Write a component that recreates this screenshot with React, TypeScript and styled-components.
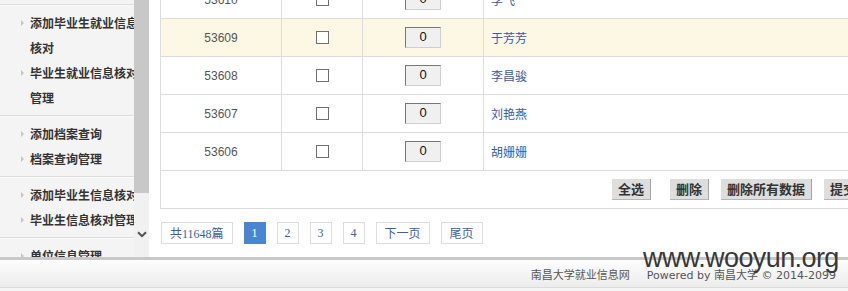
import styled, { createGlobalStyle } from "styled-components";

interface StudentRecord {
  id: number;
  name: string;
  active?: boolean;
}

const records: StudentRecord[] = [
  { id: 53610, name: "李飞" },
  { id: 53609, name: "于芳芳", active: true },
  { id: 53608, name: "李昌骏" },
  { id: 53607, name: "刘艳燕" },
  { id: 53606, name: "胡姗姗" },
];

const menuGroups: string[][] = [
  ["添加毕业生就业信息核对", "毕业生就业信息核对管理"],
  ["添加档案查询", "档案查询管理"],
  ["添加毕业生信息核对", "毕业生信息核对管理"],
  ["单位信息管理", "单位信息审核"],
];

const pages = ["1", "2", "3", "4"];

const GlobalStyle = createGlobalStyle`
  html, body {
    margin: 0;
    padding: 0;
    background: #fff;
    overflow: hidden;
  }

  body {
    font-family: "Liberation Sans", "Noto Sans CJK SC", sans-serif;
    font-size: 12px;
    color: #333;
  }
`;

const App = () => {
  return (
    <Page>
      <GlobalStyle />
      <Content>
        <Sidebar>
          <Menu>
            <MenuInner>
              {menuGroups.map((group, index) => (
                <MenuGroup key={index}>
                  {group.map((item) => (
                    <MenuItem key={item}>
                      <Bullet />
                      <MenuLabel>{item}</MenuLabel>
                    </MenuItem>
                  ))}
                </MenuGroup>
              ))}
            </MenuInner>
          </Menu>
          <ScrollTrack>
            <ScrollThumb />
            <ScrollArrow>
              <svg width="10" height="7" viewBox="0 0 10 7">
                <path
                  d="M1 1.2 L5 5.2 L9 1.2"
                  fill="none"
                  stroke="#505050"
                  strokeWidth="2"
                />
              </svg>
            </ScrollArrow>
          </ScrollTrack>
        </Sidebar>

        <Main>
          <Table>
            {records.map((record) => (
              <Row key={record.id} $active={record.active}>
                <IdCell>{record.id}</IdCell>
                <CenterCell>
                  <CheckBox type="checkbox" readOnly />
                </CenterCell>
                <CenterCell>
                  <CountInput value="0" readOnly />
                </CenterCell>
                <NameCell>{record.name}</NameCell>
              </Row>
            ))}
            <ButtonRow>
              <ActionButton $spaced>全选</ActionButton>
              <ActionButton>删除</ActionButton>
              <ActionButton>删除所有数据</ActionButton>
              <ActionButton>提交</ActionButton>
            </ButtonRow>
          </Table>

          <Pager>
            <PageLink>共11648篇</PageLink>
            {pages.map((page) => (
              <PageLink key={page} $num $active={page === "1"}>
                {page}
              </PageLink>
            ))}
            <PageLink>下一页</PageLink>
            <PageLink>尾页</PageLink>
          </Pager>
        </Main>
      </Content>

      <Footer>
        <FooterText>南昌大学就业信息网</FooterText>
        <FooterText>Powered by 南昌大学 © 2014-2099</FooterText>
      </Footer>

      <Watermark>www.wooyun.org</Watermark>
    </Page>
  );
};

const Page = styled.div`
  position: relative;
  width: 848px;
  height: 291px;
  overflow: hidden;
  background: #f5f5f5;
`;

const Content = styled.div`
  display: flex;
  height: 257px;
  overflow: hidden;
  background: #fff;
`;

const Sidebar = styled.div`
  display: flex;
  flex-shrink: 0;
  width: 149px;
`;

const Menu = styled.div`
  width: 134px;
  padding-top: 4px;
  overflow: hidden;
  background: #f4f4f4;
`;

const MenuInner = styled.div`
  width: 140px;
`;

const MenuGroup = styled.div`
  padding: 5px 0;
  border-top: 1px solid #dcdcdc;
  box-shadow: inset 0 1px 0 #fbfbfb;
`;

const MenuItem = styled.div`
  display: flex;
  align-items: flex-start;
  padding-left: 21px;
  font-family: "Noto Sans CJK SC", sans-serif;
  font-size: 12px;
  font-weight: 700;
  line-height: 25px;
  color: #333;
`;

const Bullet = styled.span`
  flex: none;
  width: 0;
  height: 0;
  margin: 10px 6px 0 0;
  border-top: 3px solid transparent;
  border-bottom: 3px solid transparent;
  border-left: 3px solid #c6c6c6;
`;

const MenuLabel = styled.span`
  width: 110px;
`;

const ScrollTrack = styled.div`
  display: flex;
  flex-direction: column;
  width: 15px;
  background: #f1f1f1;
`;

const ScrollThumb = styled.div`
  height: 193px;
  background: #c8c8c8;
`;

const ScrollArrow = styled.div`
  display: flex;
  align-items: center;
  justify-content: center;
  height: 16px;
  margin-top: 33px;
`;

const Main = styled.div`
  flex: 1;
  min-width: 0;
  padding-left: 11px;
  overflow: hidden;
`;

const Table = styled.div`
  width: 720px;
  margin-top: -19px;
  border-left: 1px solid #ddd;
`;

const Row = styled.div<{ $active?: boolean }>`
  display: grid;
  grid-template-columns: 121px 81px 121px 1fr;
  height: 38px;
  box-sizing: border-box;
  border-bottom: 1px solid #ddd;
  background: ${({ $active }) => ($active ? "#fdf8e3" : "#fff")};
`;

const Cell = styled.div`
  display: flex;
  align-items: center;
  box-sizing: border-box;
  border-right: 1px solid #ddd;
`;

const IdCell = styled(Cell)`
  justify-content: center;
  font-size: 12px;
  color: #555;
`;

const CenterCell = styled(Cell)`
  justify-content: center;
`;

const NameCell = styled(Cell)`
  padding-left: 7px;
  border-right: none;
  font-family: "Noto Sans CJK SC", sans-serif;
  font-size: 12px;
  color: #3a5ba6;
`;

const CheckBox = styled.input`
  appearance: none;
  width: 13px;
  height: 13px;
  margin: 0;
  border: 1px solid #6f6f6f;
  background: #fff;
`;

const CountInput = styled.input`
  width: 36px;
  height: 21px;
  box-sizing: border-box;
  padding: 0 0 2px;
  border: 1px solid;
  border-color: #777 #cfcfcf #cfcfcf #777;
  background: #f0f0f0;
  font-family: "Liberation Sans", sans-serif;
  font-size: 13px;
  color: #111;
  text-align: center;
  outline: none;
`;

const ButtonRow = styled.div`
  display: flex;
  align-items: center;
  justify-content: flex-end;
  gap: 12px;
  height: 38px;
  box-sizing: border-box;
  padding-right: 18px;
  border-bottom: 1px solid #ddd;
`;

const ActionButton = styled.button<{ $spaced?: boolean }>`
  height: 21px;
  margin: 0 ${({ $spaced }) => ($spaced ? "7px" : "0")} 0 0;
  padding: 0 6px;
  border: none;
  border-right: 1px solid #a3a3a3;
  border-bottom: 1px solid #b5b5b5;
  background: #dedede;
  font-family: "Noto Sans CJK SC", sans-serif;
  font-size: 13px;
  font-weight: 700;
  line-height: 20px;
  color: #333;
`;

const Pager = styled.div`
  display: flex;
  gap: 11px;
  margin: 13px 0 0 1px;
`;

const PageLink = styled.span<{ $num?: boolean; $active?: boolean }>`
  display: flex;
  align-items: center;
  height: 22px;
  box-sizing: border-box;
  padding: 0 ${({ $num }) => ($num ? "7px" : "8px")};
  border: 1px solid ${({ $active }) => ($active ? "#4a86d0" : "#ddd")};
  background: ${({ $active }) => ($active ? "#4a86d0" : "#fff")};
  font-family: "Liberation Serif", "Noto Sans CJK SC", serif;
  font-size: 12px;
  color: ${({ $active }) => ($active ? "#fff" : "#3d5fa8")};
`;

const Footer = styled.div`
  display: flex;
  align-items: center;
  justify-content: flex-end;
  gap: 17px;
  height: 31px;
  box-sizing: border-box;
  padding-right: 12px;
  border-top: 3px solid #c8c8c8;
  border-bottom: 1px solid #dcdcdc;
  background: linear-gradient(#fdfdfd, #ececec);
`;

const FooterText = styled.span`
  font-family: "DejaVu Sans", "Noto Sans CJK SC", sans-serif;
  font-size: 11px;
  color: #555;
  white-space: nowrap;
`;

const Watermark = styled.div`
  position: absolute;
  left: 643px;
  top: 245px;
  font-family: "Liberation Sans", sans-serif;
  font-size: 27px;
  line-height: 27px;
  letter-spacing: -0.6px;
  color: #383838;
  white-space: nowrap;
`;

export default App;
